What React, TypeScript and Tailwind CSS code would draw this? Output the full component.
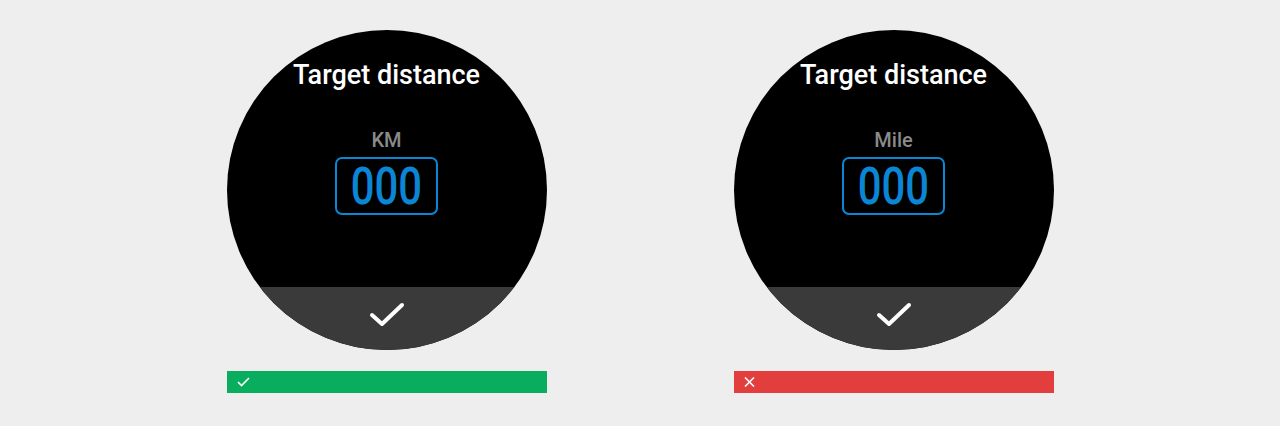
import React from "react";

const font = { fontFamily: "Roboto, 'Noto Sans', sans-serif" };

function Watch({ unit }: { unit: string }) {
  return (
    <div
      className="flex h-[320px] w-[320px] flex-col items-center overflow-hidden rounded-full bg-black"
      style={font}
    >
      <div className="pt-[29px] text-[27px] font-medium leading-[32px] text-white">
        Target distance
      </div>
      <div className="mt-[37px] text-[20px] font-medium leading-[24px] text-[#8a8a8a]">
        {unit}
      </div>
      <div className="mt-[5px] flex h-[58px] w-[103px] items-center justify-center rounded-[7px] border-2 border-[#0a86d4]">
        <span className="inline-block scale-x-[0.82] text-[51px] leading-none font-medium text-[#0a86d4]">
          000
        </span>
      </div>
      <div className="flex-1" />
      <div className="flex h-[63px] w-full justify-center bg-[#3a3a3a] pt-[15px]">
        <svg width="36" height="26" viewBox="0 0 36 26" fill="none">
          <path
            d="M3 13 L13 22 L33 3"
            stroke="#fff"
            strokeWidth="4"
            strokeLinecap="round"
            strokeLinejoin="round"
          />
        </svg>
      </div>
    </div>
  );
}

function Bar({ ok }: { ok: boolean }) {
  return (
    <div
      className={`mt-[21px] flex h-[22px] w-[320px] items-center pl-[10px] ${
        ok ? "bg-[#08ae5e]" : "bg-[#e23e3e]"
      }`}
    >
      {ok ? (
        <svg width="13" height="10" viewBox="0 0 13 10" fill="none">
          <path d="M1 5 L4.5 8.5 L12 1" stroke="#fff" strokeWidth="1.6" />
        </svg>
      ) : (
        <svg width="11" height="10" viewBox="0 0 11 10" fill="none">
          <path d="M1 0.5 L10 9.5 M10 0.5 L1 9.5" stroke="#fff" strokeWidth="1.6" />
        </svg>
      )}
    </div>
  );
}

export default function App() {
  return (
    <div className="flex h-[426px] w-full justify-center gap-[187px] bg-[#eeeeee] pt-[30px]">
      <div className="flex flex-col">
        <Watch unit="KM" />
        <Bar ok />
      </div>
      <div className="flex flex-col">
        <Watch unit="Mile" />
        <Bar ok={false} />
      </div>
    </div>
  );
}
